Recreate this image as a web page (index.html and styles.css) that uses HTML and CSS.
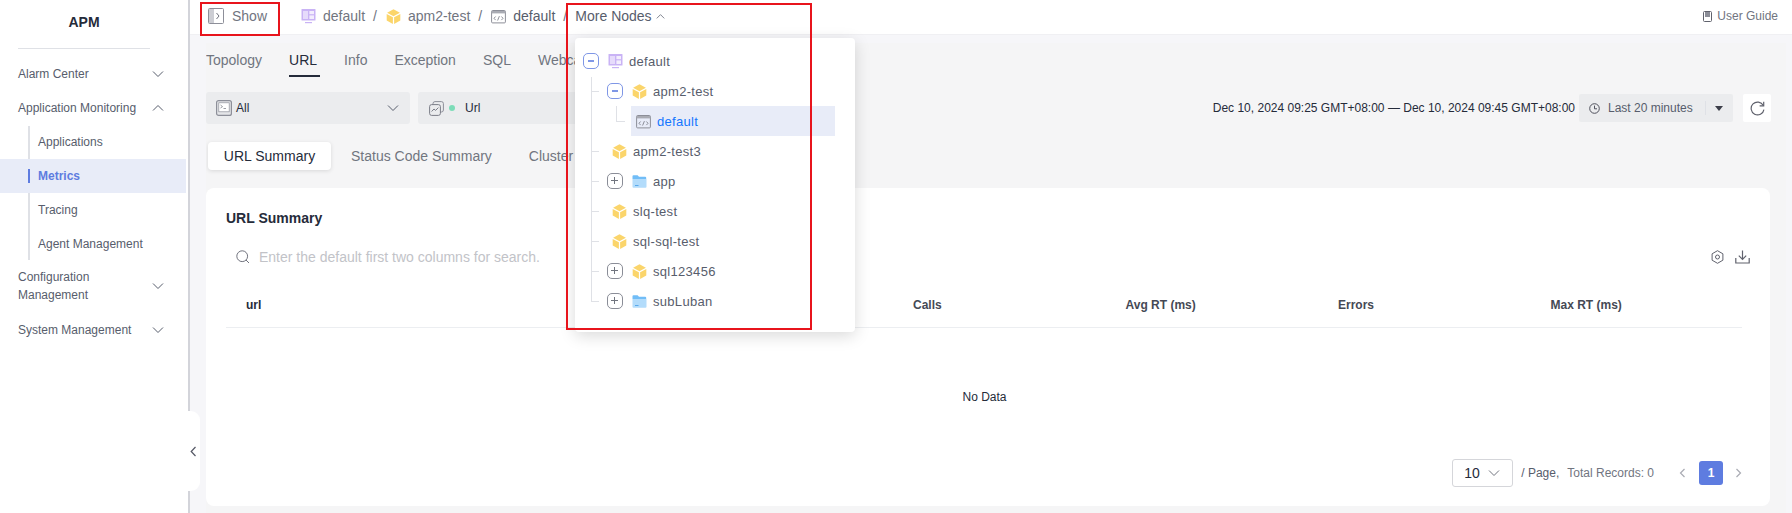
FILE: index.html
```html
<!DOCTYPE html>
<html lang="en">
<head>
<meta charset="utf-8">
<title>APM</title>
<link rel="stylesheet" href="styles.css">
</head>
<body>
<svg class="defs" width="0" height="0" aria-hidden="true">
  <symbol id="i-cube" viewBox="0 0 14 15">
    <path d="M7 0.3 13.4 3.8 7 7.2 0.6 3.8Z" fill="#fbd56b"/>
    <path d="M0.2 4.9 6.4 8.3V14.9L0.2 11.4Z" fill="#fbd56b"/>
    <path d="M13.8 4.9 7.6 8.3V14.9L13.8 11.4Z" fill="#fbd56b"/>
  </symbol>
  <symbol id="i-dash" viewBox="0 0 15 15">
    <rect x="0.5" y="0" width="14" height="11.5" rx="0.6" fill="#c9b3f5"/>
    <rect x="2" y="2" width="5" height="8" fill="#e6dbfb"/>
    <rect x="8.4" y="2" width="4.6" height="3.2" fill="#f3eefd"/>
    <rect x="8.4" y="6.4" width="4.6" height="3.6" fill="#f3eefd"/>
    <rect x="4" y="13" width="7" height="1.2" fill="#c9b3f5"/>
  </symbol>
  <symbol id="i-code" viewBox="0 0 15 14">
    <rect x="0.6" y="1" width="13.8" height="12.4" rx="1" fill="none" stroke="#8c8e98" stroke-width="1"/>
    <path d="M0.6 1.5h13.8v2.4H0.6Z" fill="#a9abb3"/>
    <path d="M4.6 7 3 8.8 4.6 10.6M10.4 7 12 8.8 10.4 10.6M8.4 6.6 6.6 11" fill="none" stroke="#71737e" stroke-width="0.8"/>
  </symbol>
  <symbol id="i-folder" viewBox="0 0 15 13">
    <path d="M0.5 1.2A1 1 0 0 1 1.5 0.2H5.6L7 1.8H13.2A1 1 0 0 1 14.2 2.8V4H0.5Z" fill="#71bdf7"/>
    <path d="M0.5 4H14.5V11.8A1 1 0 0 1 13.5 12.8H1.5A1 1 0 0 1 0.5 11.8Z" fill="#b3dcfb"/>
    <rect x="3" y="10" width="3.5" height="1" fill="#5aa9ea"/>
  </symbol>
  <symbol id="i-down" viewBox="0 0 12 12"><path d="M1 3.5 6 8.5 11 3.5" fill="none" stroke="currentColor" stroke-width="1"/></symbol>
</svg>

<aside class="sidebar">
  <h1 class="brand">APM</h1>
  <div class="brand-rule"></div>
  <nav class="nav">
    <div class="nav-item"><span>Alarm Center</span><svg class="chev"><use href="#i-down"/></svg></div>
    <div class="nav-item"><span>Application Monitoring</span><svg class="chev flip"><use href="#i-down"/></svg></div>
    <div class="subnav">
      <div class="sub-item">Applications</div>
      <div class="sub-item active">Metrics</div>
      <div class="sub-item">Tracing</div>
      <div class="sub-item">Agent Management</div>
    </div>
    <div class="nav-item tall"><span>Configuration<br>Management</span><svg class="chev"><use href="#i-down"/></svg></div>
    <div class="nav-item"><span>System Management</span><svg class="chev"><use href="#i-down"/></svg></div>
  </nav>
</aside>
<div class="handle"><svg width="7" height="11" viewBox="0 0 7 11"><path d="M5.5 1 1.2 5.5 5.5 10" fill="none" stroke="#555865" stroke-width="1.2"/></svg></div>

<div class="page">
  <header class="topbar">
    <div class="show">
      <svg width="16" height="16" viewBox="0 0 16 16"><rect x="0.5" y="0.5" width="15" height="15" rx="1" fill="#fff" stroke="#8d8f99"/><rect x="1" y="1" width="5" height="14" fill="#cdced4"/><path d="M8.5 5 11 8 8.5 11" fill="none" stroke="#70727d"/></svg>
      <span>Show</span>
    </div>
    <div class="crumbs">
      <svg class="ci"><use href="#i-dash"/></svg><span class="crumb">default</span><span class="sep">/</span>
      <svg class="ci"><use href="#i-cube"/></svg><span class="crumb">apm2-test</span><span class="sep">/</span>
      <svg class="ci"><use href="#i-code"/></svg><span class="crumb cur">default</span><span class="sep">/</span>
      <span class="crumb more">More Nodes</span><svg class="caret flip"><use href="#i-down"/></svg>
    </div>
    <div class="guide">
      <svg width="9" height="11" viewBox="0 0 9 11"><rect x="0.5" y="0.5" width="8" height="10" rx="1" fill="none" stroke="#60626d"/><rect x="2" y="1" width="5" height="5" fill="#8c8e98"/></svg>
      <span>User Guide</span>
    </div>
  </header>

  <main class="content">
    <div class="tabs">
      <span class="tab">Topology</span>
      <span class="tab on">URL</span>
      <span class="tab">Info</span>
      <span class="tab">Exception</span>
      <span class="tab">SQL</span>
      <span class="tab">Webcall</span>
    </div>

    <div class="filters">
      <div class="select s-all">
        <svg width="16" height="16" viewBox="0 0 16 16"><rect x="0.6" y="0.6" width="14.8" height="14.8" rx="2" fill="#e4e5e8" stroke="#8d8f99" stroke-width="1.2"/><rect x="2.8" y="2.8" width="10.4" height="9" fill="#fff" stroke="#8d8f99" stroke-width="0.7"/><path d="M4.5 5 6.5 6.6 4.5 8M7.5 8.5H10" fill="none" stroke="#70727d" stroke-width="0.7"/></svg>
        <span>All</span>
        <svg class="select-chev"><use href="#i-down"/></svg>
      </div>
      <div class="select s-url">
        <svg width="15" height="15" viewBox="0 0 15 15"><rect x="4" y="0.6" width="10.4" height="10.4" rx="2" fill="none" stroke="#8d8f99"/><rect x="0.6" y="3.6" width="10.8" height="10.8" rx="2" fill="#ebecee" stroke="#7b7d87"/><path d="M2.6 10.5 5 8 6.6 9.4 9.4 6.6" fill="none" stroke="#7b7d87"/></svg>
        <i class="dot"></i>
        <span>Url</span>
      </div>
      <div class="range">Dec 10, 2024 09:25 GMT+08:00 — Dec 10, 2024 09:45 GMT+08:00</div>
      <div class="time">
        <svg width="11" height="11" viewBox="0 0 11 11"><circle cx="5.5" cy="5.5" r="4.8" fill="none" stroke="#4f515c"/><path d="M5.5 2.6V5.8H8" fill="none" stroke="#4f515c"/></svg>
        <span>Last 20 minutes</span>
        <i class="time-rule"></i>
        <i class="tri"></i>
      </div>
      <div class="refresh">
        <svg width="15" height="15" viewBox="0 0 14 14"><path d="M12.4 4.2A6 6 0 1 0 13 8" fill="none" stroke="#5d5f6a" stroke-width="1.1"/><path d="M12.8 0.8V4.6H9" fill="none" stroke="#5d5f6a" stroke-width="1.1"/></svg>
      </div>
    </div>

    <div class="subtabs">
      <span class="subtab on">URL Summary</span>
      <span class="subtab">Status Code Summary</span>
      <span class="subtab">Cluster Summary</span>
    </div>

    <section class="card">
      <h2 class="card-title">URL Summary</h2>
      <div class="search">
        <svg width="14" height="14" viewBox="0 0 14 14"><circle cx="6.2" cy="6.2" r="5.4" fill="none" stroke="#71737e"/><path d="M10 10 13 13" stroke="#71737e"/></svg>
        <span class="ph">Enter the default first two columns for search.</span>
        <div class="tools">
          <svg width="13" height="14" viewBox="0 0 13 14"><path d="M6.5 0.7 11.9 3.8V10.2L6.5 13.3 1.1 10.2V3.8Z" fill="none" stroke="#60626d" stroke-linejoin="round"/><circle cx="6.5" cy="7" r="2" fill="none" stroke="#60626d"/></svg>
          <svg width="15" height="14" viewBox="0 0 15 14"><path d="M7.5 0.5V9M3.8 5.6 7.5 9.3 11.2 5.6" fill="none" stroke="#60626d" stroke-width="1.2"/><path d="M0.8 8V13H14.2V8" fill="none" stroke="#60626d" stroke-width="1.2"/></svg>
        </div>
      </div>
      <div class="thead">
        <span>url</span><span>Calls</span><span>Avg RT (ms)</span><span>Errors</span><span>Max RT (ms)</span>
      </div>
      <div class="empty">No Data</div>
      <div class="pager">
        <div class="size"><span>10</span><svg><use href="#i-down"/></svg></div>
        <span class="per">/ Page,</span>
        <span class="total">Total Records: 0</span>
        <svg class="pg-arrow" width="7" height="10" viewBox="0 0 7 10"><path d="M5.5 1 1.5 5 5.5 9" fill="none" stroke="#a9abb3" stroke-width="1.2"/></svg>
        <span class="pg-num">1</span>
        <svg class="pg-arrow" width="7" height="10" viewBox="0 0 7 10"><path d="M1.5 1 5.5 5 1.5 9" fill="none" stroke="#a9abb3" stroke-width="1.2"/></svg>
      </div>
    </section>
  </main>
</div>

<div class="popover">
  <div class="tree">
    <div class="node root"><i class="box open"></i><svg class="ti"><use href="#i-dash"/></svg><span>default</span></div>
    <div class="node l1 stub"><i class="box open"></i><svg class="ti"><use href="#i-cube"/></svg><span>apm2-test</span></div>
    <div class="node l2 sel"><svg class="ti"><use href="#i-code"/></svg><span>default</span></div>
    <div class="node l1b stub"><svg class="ti"><use href="#i-cube"/></svg><span>apm2-test3</span></div>
    <div class="node l1 stub"><i class="box"></i><svg class="ti"><use href="#i-folder"/></svg><span>app</span></div>
    <div class="node l1b stub"><svg class="ti"><use href="#i-cube"/></svg><span>slq-test</span></div>
    <div class="node l1b stub"><svg class="ti"><use href="#i-cube"/></svg><span>sql-sql-test</span></div>
    <div class="node l1 stub"><i class="box"></i><svg class="ti"><use href="#i-cube"/></svg><span>sql123456</span></div>
    <div class="node l1 stub"><i class="box"></i><svg class="ti"><use href="#i-folder"/></svg><span>subLuban</span></div>
  </div>
</div>
<div class="mark mark-show"></div>
<div class="mark mark-nodes"></div>
</body>
</html>
```

FILE: styles.css
```css
* { box-sizing: border-box; }
html, body { margin: 0; height: 513px; overflow: hidden; }
body {
  display: flex;
  position: relative;
  width: 1792px;
  font-family: "Liberation Sans", Arial, sans-serif;
  font-size: 12px;
  color: #252b3a;
  background: #fff;
}
.defs { position: absolute; }
i { display: block; }

/* sidebar */
.sidebar { width: 186px; flex: none; background: #fff; }
.brand { margin: 0; width: 168px; height: 48px; padding-top: 14px; font-size: 14px; line-height: 16px; font-weight: 700; text-align: center; color: #252b3a; }
.brand-rule { height: 1px; margin: 0 36px 0 18px; background: #dfe1e6; }
.nav { padding-top: 8px; }
.nav-item { display: flex; align-items: center; justify-content: space-between; min-height: 34px; padding: 0 22px 0 18px; line-height: 18px; color: #575d6c; }
.nav-item.tall { min-height: 52px; padding-bottom: 2px; }
.chev { width: 12px; height: 12px; color: #575d6c; }
.flip { transform: scaleY(-1); }
.subnav { position: relative; }
.subnav::before { content: ""; position: absolute; left: 28px; top: 1px; bottom: 1px; width: 2px; background: #dfe1e6; }
.sub-item { position: relative; height: 34px; line-height: 34px; padding-left: 38px; color: #575d6c; }
.sub-item.active { background: #e8ecf8; color: #5e7ce0; font-weight: 700; }
.sub-item.active::before { content: ""; position: absolute; left: 28px; top: 10px; width: 2px; height: 14px; background: #5e7ce0; }
.handle { position: absolute; left: 186px; top: 411px; width: 14px; height: 80px; background: #fff; border-radius: 0 9px 9px 0; display: flex; align-items: center; padding-left: 4px; z-index: 2; }

/* page */
.page { flex: 1; min-width: 0; display: flex; flex-direction: column; background: #f6f6f9; border-left: 2px solid #fff; box-shadow: inset 2px 0 0 #d3d4da; }
.topbar { height: 35px; flex: none; display: flex; align-items: center; margin-left: 2px; padding: 0 14px 2px 18px; background: #fff; border-bottom: 1px solid #f0f0f3; }
.show { display: flex; align-items: center; gap: 8px; font-size: 14px; color: #71757f; width: 93px; }
.crumbs { display: flex; align-items: center; font-size: 14px; color: #71757f; }
.ci { width: 15px; height: 15px; margin-right: 7px; }
.sep { margin: 0 8px; width: 5px; }
.crumb.cur { color: #575d6c; }
.crumb.more { color: #575d6c; margin-left: -1px; }
.caret { width: 9px; height: 9px; margin-left: 4px; color: #575d6c; }
.guide { margin-left: auto; display: flex; align-items: center; gap: 5px; color: #71757f; white-space: nowrap; }

.content { flex: 1; min-height: 0; margin: 8px 6px 0 18px; background: #f5f5f6; overflow: hidden; }

.tabs { display: flex; height: 34px; font-size: 14px; color: #71757f; }
.tab { margin-right: 27px; height: 34px; line-height: 22px; padding-top: 6px; white-space: nowrap; }
.tab.on { color: #252b3a; border-bottom: 2px solid #252b3a; padding-right: 3px; margin-right: 24px; }

.filters { display: flex; align-items: center; height: 32px; margin-top: 15px; }
.select { height: 32px; display: flex; align-items: center; background: #ebecee; border-radius: 3px; padding-left: 10px; }
.s-all { width: 204px; gap: 4px; position: relative; }
.select-chev { width: 12px; height: 12px; position: absolute; right: 11px; top: 10px; color: #575d6c; }
.s-url { width: 220px; margin-left: 8px; gap: 5px; padding-left: 11px; }
.dot { width: 6px; height: 6px; border-radius: 50%; background: #7ddcb8; }
.s-url span { margin-left: 5px; }
.range { margin-left: auto; white-space: nowrap; color: #252b3a; margin-right: 4px; }
.time { width: 154px; flex: none; height: 28px; display: flex; align-items: center; background: #ebecee; border-radius: 2px; padding-left: 10px; color: #575d6c; }
.time svg { flex: none; }
.time span { margin-left: 8px; white-space: nowrap; }
.time-rule { width: 1px; height: 14px; background: #dfe1e6; margin-left: 12px; }
.tri { width: 0; height: 0; margin-left: 9px; border: 4px solid transparent; border-top: 5px solid #3c3e49; border-bottom: 0; }
.refresh { width: 28px; flex: none; height: 28px; margin: 0 15px 0 10px; background: #fff; border-radius: 2px; display: flex; align-items: center; justify-content: center; }

.subtabs { display: flex; align-items: center; height: 28px; margin-top: 18px; margin-left: 2px; font-size: 14px; color: #71757f; }
.subtab { white-space: nowrap; margin-right: 37px; }
.subtab.on { width: 123px; height: 28px; line-height: 28px; text-align: center; background: #fff; color: #252b3a; border-radius: 4px; box-shadow: 0 1px 4px rgba(0,0,0,.12); margin-right: 20px; }

.card { background: #fff; border-radius: 8px; margin-top: 18px; width: 1564px; height: 318px; padding: 0 27px 0 20px; }
.card-title { margin: 0; padding-top: 22px; font-size: 14px; line-height: 16px; font-weight: 700; color: #252b3a; }
.search { display: flex; align-items: center; height: 16px; margin-top: 23px; margin-right: -7px; padding-left: 10px; font-size: 14px; }
.ph { margin-left: 9px; color: #c2c3c8; }
.tools { margin-left: auto; display: flex; align-items: center; gap: 11px; }
.thead { display: grid; grid-template-columns: 667px repeat(4, 212.5px); width: 1516px; height: 46px; align-items: center; margin-top: 17px; padding-left: 20px; border-bottom: 1px solid #eceef1; font-weight: 700; color: #454955; }
.thead span:first-child { color: #252b3a; }
.empty { height: 131px; padding-top: 60px; text-align: center; line-height: 18px; color: #252b3a; }
.pager { display: flex; align-items: center; height: 28px; justify-content: flex-end; color: #575d6c; }
.size { width: 61px; height: 28px; display: flex; align-items: center; justify-content: space-between; padding: 0 12px 0 11px; border: 1px solid #d5d6da; border-radius: 3px; font-size: 14px; color: #252b3a; }
.size svg { width: 12px; height: 12px; color: #71757f; }
.per { margin-left: 8px; }
.total { margin-left: 8px; color: #71757f; }
.pg-arrow { margin-left: 25px; }
.pg-num { width: 24px; height: 24px; line-height: 24px; margin-left: 13px; text-align: center; background: #5e7ce0; color: #fff; font-weight: 700; border-radius: 3px; }
.pg-num + .pg-arrow { margin-left: 12px; margin-right: 1px; }

/* floating tree */
.popover { position: absolute; left: 575px; top: 38px; width: 280px; height: 294px; padding-top: 8px; background: #fff; border-radius: 4px; box-shadow: 0 4px 16px rgba(0,0,0,.15); z-index: 3; }
.tree { position: relative; font-size: 13px; letter-spacing: .3px; color: #575d6c; }
.tree::before { content: ""; position: absolute; left: 16px; top: 31px; height: 225px; width: 1px; background: #dfe1e6; }
.node { position: relative; height: 30px; display: flex; align-items: center; white-space: nowrap; }
.stub::before { content: ""; position: absolute; left: 16px; top: 15px; width: 8px; height: 1px; background: #dfe1e6; }
.root { padding-left: 8px; }
.l1 { padding-left: 32px; }
.l1b { padding-left: 37px; }
.l2 { margin-left: 56px; width: 204px; padding-left: 5px; background: #e8ecf8; color: #1476ff; }
.l2::before { content: ""; position: absolute; left: -15px; top: 0; width: 8px; height: 15px; border-left: 1px solid #dfe1e6; border-bottom: 1px solid #dfe1e6; }
.ti { width: 15px; height: 15px; flex: none; margin-right: 6px; }
.box { position: relative; width: 16px; height: 16px; flex: none; margin-right: 9px; border: 1px solid #8a8d97; border-radius: 5px; }
.box::before { content: ""; position: absolute; left: 3px; top: 6px; width: 7px; height: 1px; background: #71757f; }
.box::after { content: ""; position: absolute; left: 6px; top: 3px; width: 1px; height: 7px; background: #71757f; }
.box.open { border-color: #7f97e6; }
.box.open::before { left: 4px; width: 6px; height: 2px; background: #7f97e6; }
.box.open::after { display: none; }

.mark { position: absolute; border: 2px solid #e8141c; z-index: 4; pointer-events: none; }
.mark-show { left: 200px; top: 2px; width: 80px; height: 34px; }
.mark-nodes { left: 566px; top: 3px; width: 246px; height: 327px; }
```
